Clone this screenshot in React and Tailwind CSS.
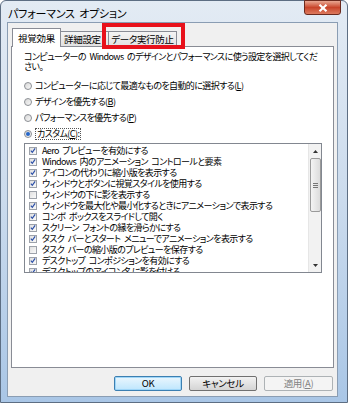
import React from 'react';

const items = [
  ['Aero プレビューを有効にする', true],
  ['Windows 内のアニメーション コントロールと要素', true],
  ['アイコンの代わりに縮小版を表示する', true],
  ['ウィンドウとボタンに視覚スタイルを使用する', true],
  ['ウィンドウの下に影を表示する', false],
  ['ウィンドウを最大化や最小化するときにアニメーションで表示する', true],
  ['コンボ ボックスをスライドして開く', true],
  ['スクリーン フォントの縁を滑らかにする', true],
  ['タスク バーとスタート メニューでアニメーションを表示する', true],
  ['タスク バーの縮小版のプレビューを保存する', false],
  ['デスクトップ コンポジションを有効にする', true],
  ['デスクトップのアイコン名に影を付ける', true],
];

const Radio = ({ on }) => (
  <span className="w-[8px] h-[8px] rounded-full border border-[#8c8f94] bg-gradient-to-br from-[#d8d8d8] to-[#f8f8f8] flex items-center justify-center shrink-0">
    {on && <span className="w-[4px] h-[4px] rounded-full bg-[#2566c9]" />}
  </span>
);

const Check = ({ on }) => (
  <span className="w-[8px] h-[8px] border border-[#9da2aa] bg-gradient-to-br from-[#e0e0e0] to-[#fafafa] flex items-center justify-center shrink-0">
    {on && (
      <svg width="7" height="7" viewBox="0 0 7 7">
        <path d="M1 3.6 L2.7 5.6 L6 1" fill="none" stroke="#2b4fa8" strokeWidth="1.4" />
      </svg>
    )}
  </span>
);

const U = ({ children }) => <span className="underline underline-offset-1">{children}</span>;

export default function App() {
  return (
    <div className="w-[348px] h-[403px] bg-white font-['Noto_Sans_CJK_JP',sans-serif] [font-feature-settings:'palt'] text-black">
      <div className="relative h-[403px] flex flex-col rounded-t-[6px] border border-[#5d6e83] bg-gradient-to-b from-[#e3ebf4] via-[#cbdbed] to-[#a9c6e6] pl-[6px] pr-[9px] pb-[5px]">
        {/* title bar */}
        <div className="h-[21px] flex items-start justify-between">
          <span className="text-[11px] leading-[11px] mt-[7px] ml-px tracking-[-0.2px] [word-spacing:2px]">パフォーマンス オプション</span>
          <div className="w-[37px] h-[15px] -mt-px -mr-[3px] rounded-b-[3px] border border-[#6b2a1e] bg-gradient-to-b from-[#e8a792] via-[#c8442a] to-[#dd7a5e] flex items-center justify-center">
            <svg width="10" height="8" viewBox="0 0 10 8">
              <path d="M1.5 0.8 L8.5 7.2 M8.5 0.8 L1.5 7.2" stroke="#ffffff" strokeWidth="2.2" />
            </svg>
          </div>
        </div>

        {/* client area */}
        <div className="flex-1 flex flex-col bg-[#f0f0f0] border border-[#8a9db3] px-[3px] pt-[5px]">
          {/* tabs */}
          <div className="h-[18px] flex items-end pl-px text-[9.5px] tracking-[-0.3px]">
            <div className="relative z-10 w-[49px] h-[19px] -mb-px bg-white border border-b-0 border-[#898c95] flex items-center justify-center">
              視覚効果
            </div>
            <div className="w-[49px] h-[15px] -ml-px border border-b-0 border-[#898c95] bg-gradient-to-b from-[#f4f4f4] to-[#e2e2e2] flex items-center justify-start pl-[3px]">
              詳細設定
            </div>
            <div className="w-[69px] h-[15px] -ml-px border border-b-0 border-[#898c95] bg-gradient-to-b from-[#f4f4f4] to-[#e2e2e2] flex items-center justify-center">
              データ実行防止
            </div>
          </div>

          {/* panel */}
          <div className="h-[322px] bg-white border border-[#898c95] pl-[12px] text-[9px] tracking-[-0.6px] [word-spacing:2px]">
            <p className="mt-[5px] leading-[10px] whitespace-nowrap">
              コンピューターの Windows のデザインとパフォーマンスに使う設定を選択してくだ
              <br />
              さい。
            </p>
            <div className="mt-[7px] flex flex-col gap-[2px]">
              <div className="h-[14px] flex items-center gap-[3px]">
                <Radio />
                <span>コンピューターに応じて最適なものを自動的に選択する(<U>L</U>)</span>
              </div>
              <div className="h-[14px] flex items-center gap-[3px]">
                <Radio />
                <span>デザインを優先する(<U>B</U>)</span>
              </div>
              <div className="h-[14px] flex items-center gap-[3px]">
                <Radio />
                <span>パフォーマンスを優先する(<U>P</U>)</span>
              </div>
              <div className="h-[14px] flex items-center gap-[3px]">
                <Radio on />
                <span className="border border-dotted border-[#555] leading-[10px] px-px">カスタム(<U>C</U>):</span>
              </div>
            </div>

            {/* list */}
            <div className="mt-[2px] w-[298px] h-[130px] border border-[#828790] flex overflow-hidden">
              <div className="flex-1 pt-px pl-[4px] overflow-hidden">
                {items.map(([label, on]) => (
                  <div key={label} className="h-[11px] flex items-center gap-[5px] whitespace-nowrap leading-[11px]">
                    <Check on={on} />
                    <span>{label}</span>
                  </div>
                ))}
              </div>
              <div className="w-[13px] bg-[#f2f2f2] border-l border-[#e6e6e6] flex flex-col items-center">
                <div className="h-[14px] flex items-center justify-center">
                  <svg width="5" height="3" viewBox="0 0 5 3"><path d="M0 3 L2.5 0 L5 3 Z" fill="#333" /></svg>
                </div>
                <div className="w-[11px] h-[54px] rounded-[2px] border border-[#9a9a9a] bg-gradient-to-r from-[#f4f4f4] to-[#dcdcdc] flex flex-col items-center justify-center gap-px">
                  <span className="w-[5px] h-px bg-[#777]" />
                  <span className="w-[5px] h-px bg-[#777]" />
                  <span className="w-[5px] h-px bg-[#777]" />
                </div>
                <div className="flex-1" />
                <div className="h-[14px] flex items-center justify-center">
                  <svg width="5" height="3" viewBox="0 0 5 3"><path d="M0 0 L5 0 L2.5 3 Z" fill="#333" /></svg>
                </div>
              </div>
            </div>
          </div>

          {/* buttons */}
          <div className="mt-[8px] flex justify-end gap-[7px] pr-px text-[9.5px] tracking-[-0.3px]">
            <div className="w-[68px] h-[15px] rounded-[2px] border border-[#3c7fb1] bg-gradient-to-b from-[#eaf6fd] to-[#bee6fd] flex items-center justify-center shadow-[inset_0_0_0_1px_#9fd6f8]">
              OK
            </div>
            <div className="w-[68px] h-[15px] rounded-[2px] border border-[#707070] bg-gradient-to-b from-[#f2f2f2] to-[#d4d4d4] flex items-center justify-center">
              キャンセル
            </div>
            <div className="w-[69px] h-[15px] rounded-[2px] border border-[#adb2b5] bg-[#f4f4f4] text-[#838383] flex items-center justify-center">
              適用(<U>A</U>)
            </div>
          </div>
        </div>

        {/* red highlight annotation */}
        <div className="absolute left-[101px] top-[22px] w-[83px] h-[26px] border-[4px] border-[#e8111b]" />
      </div>
    </div>
  );
}
